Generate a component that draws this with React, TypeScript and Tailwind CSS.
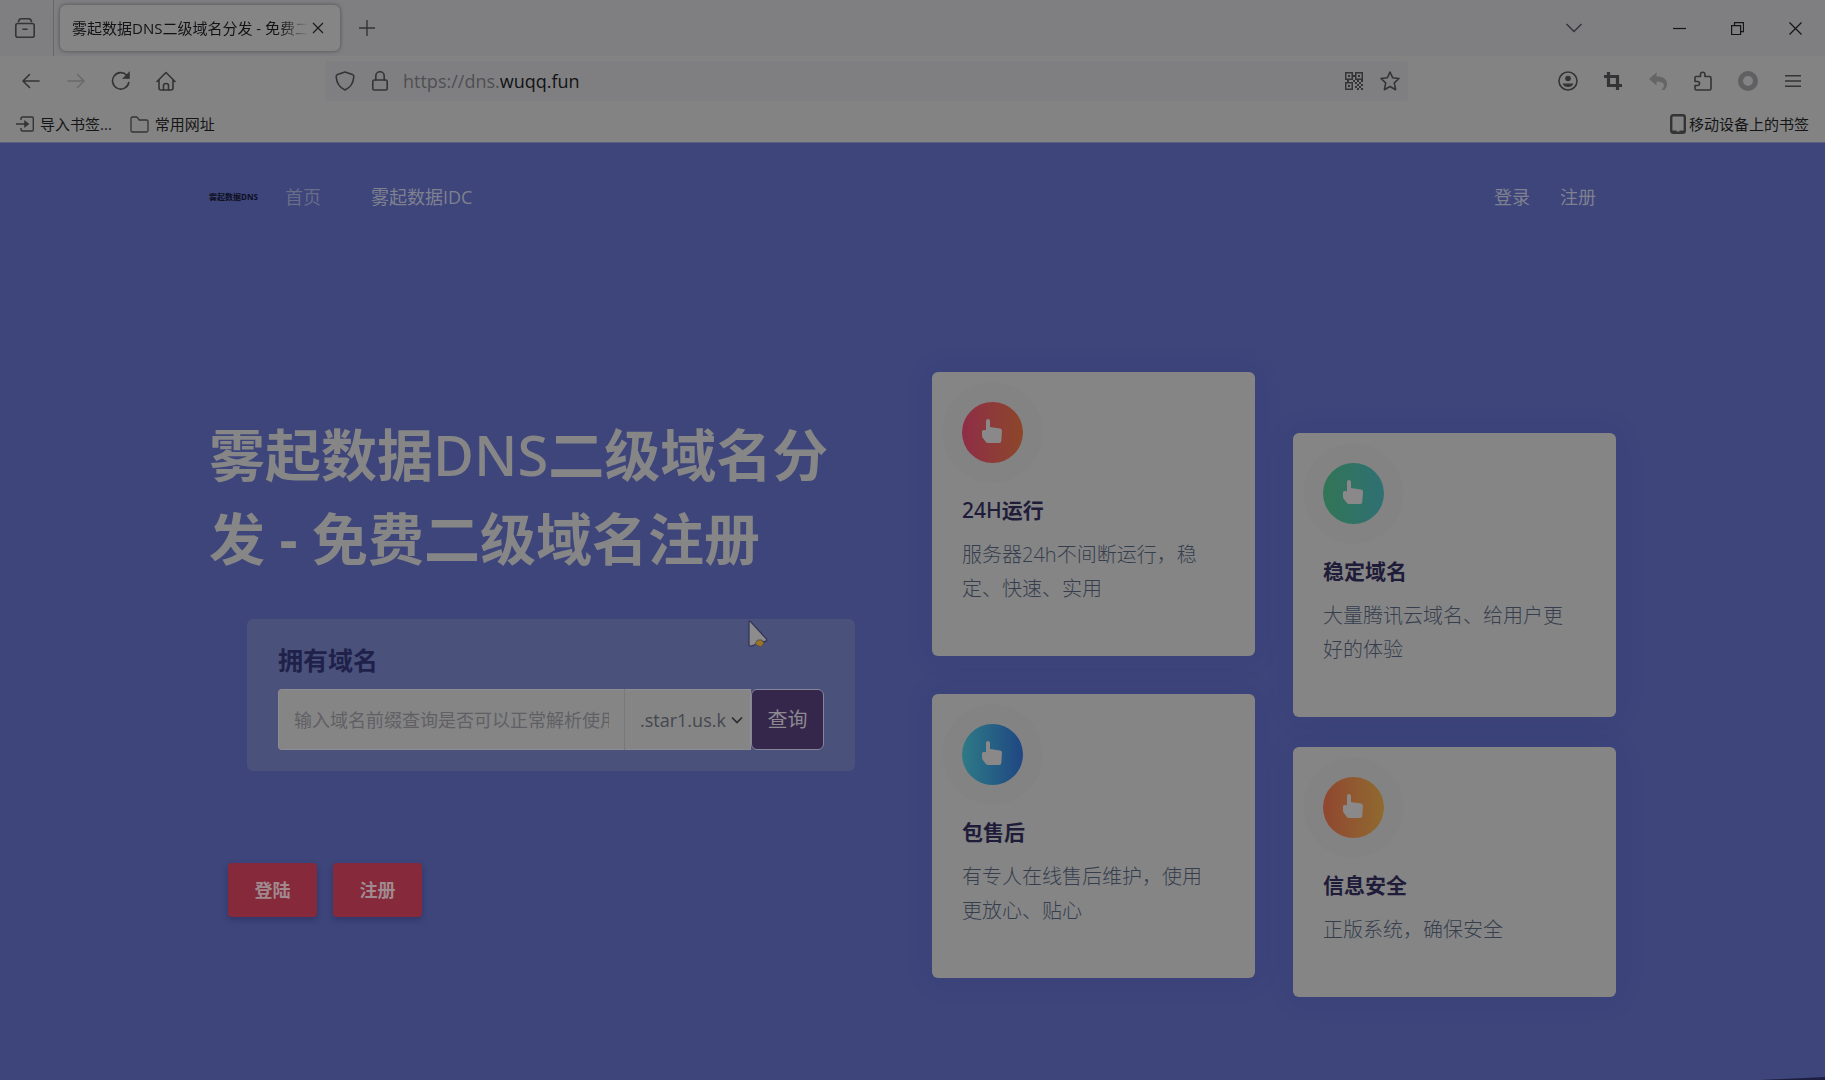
import React from "react";

type IconProps = { children: React.ReactNode; size?: string };

function ToolButton({ label, children, tone = "text-[#343437]" }: { label: string; children: React.ReactNode; tone?: string }) {
  return (
    <button aria-label={label} className={`flex h-10 w-[45px] shrink-0 items-center justify-center ${tone}`}>
      {children}
    </button>
  );
}

function Stroke({ children, size = "size-5" }: IconProps) {
  return (
    <svg viewBox="0 0 20 20" className={size} fill="none" stroke="currentColor" strokeWidth="1.600" strokeLinecap="round" strokeLinejoin="round" aria-hidden="true">
      {children}
    </svg>
  );
}

function TabStrip() {
  return (
    <div className="flex h-14 items-center bg-[#7f7f82]">
      <div className="flex h-full w-[54px] shrink-0 items-center justify-center border-r border-[#67676a] pr-1">
        <button aria-label="最近浏览" className="text-[#343437]">
          <Stroke>
            <path d="M3.500 3.500Q4 .8 6.500 .8h7Q16 .8 16.500 3.500" />
            <rect x=".8" y="5.500" width="18.400" height="13.700" rx="2" />
            <path d="M8 11.300h4" />
          </Stroke>
        </button>
      </div>
      <div className="ml-1.5 flex h-[46px] w-[280px] items-center rounded-md bg-[#858585] pr-4 pl-3 shadow-[0_0_4px_rgba(0,0,0,0.4)]">
        <span className="flex-1 overflow-hidden text-[15px] whitespace-nowrap text-[#131316] [mask-image:linear-gradient(to_right,black_88%,transparent)]">
          雾起数据DNS二级域名分发 - 免费二级域名注册
        </span>
        <button aria-label="关闭标签页" className="ml-1 text-[#1d1d20]">
          <svg viewBox="0 0 12 12" className="size-3" stroke="currentColor" strokeWidth="1.300" aria-hidden="true">
            <path d="M1 1l10 10M11 1L1 11" />
          </svg>
        </button>
      </div>
      <button aria-label="新建标签页" className="ml-[19px] text-[#343437]">
        <svg viewBox="0 0 16 16" className="size-4" stroke="currentColor" strokeWidth="1.400" aria-hidden="true">
          <path d="M8 0v16M0 8h16" />
        </svg>
      </button>
      <div className="flex-1" />
      <button aria-label="列出所有标签页" className="mr-12 flex w-[58px] justify-center text-[#343437]">
        <svg viewBox="0 0 16 10" className="h-[10px] w-4" fill="none" stroke="currentColor" strokeWidth="1.400" aria-hidden="true">
          <path d="M.5 1L8 8.500 15.500 1" />
        </svg>
      </button>
      {[
        ["最小化", "M0 6.500h13"],
        ["还原", "M.6 3.600h9v9h-9zM3.500 3.500V.6h9v9H9.600"],
        ["关闭", "M.5 .5l12 12M12.500 .5l-12 12"],
      ].map(([label, d]) => (
        <button key={label} aria-label={label} className="flex h-full w-[58px] items-center justify-center pr-0.5 text-[#151517]">
          <svg viewBox="0 0 13 13" className="size-[13px]" fill="none" stroke="currentColor" strokeWidth="1.200" aria-hidden="true">
            <path d={d} />
          </svg>
        </button>
      ))}
    </div>
  );
}

function AddressBar() {
  return (
    <div className="flex h-[50px] items-center bg-[#838383] pr-2.5 pl-2">
      <ToolButton label="后退">
        <Stroke><path d="M18 10H2M8.500 3.500L2 10l6.500 6.500" /></Stroke>
      </ToolButton>
      <ToolButton label="前进" tone="text-[#6a6a6b]">
        <Stroke><path d="M2 10h16M11.500 3.500L18 10l-6.500 6.500" /></Stroke>
      </ToolButton>
      <ToolButton label="刷新">
        <Stroke>
          <path d="M17.800 11.500A8.200 8.200 0 1 1 15.800 4.300" />
          <path d="M18.500 1v6.500H12z" fill="currentColor" strokeWidth=".6" />
        </Stroke>
      </ToolButton>
      <ToolButton label="主页">
        <Stroke>
          <path d="M1 10.500L10 1.500l9 9M3 8.800V17q0 2 2 2h10q2 0 2-2V8.800" />
          <path d="M7.500 19v-4.500q0-2 2.500-2t2.500 2V19" />
        </Stroke>
      </ToolButton>
      <div className="ml-[137px] flex h-10 flex-1 items-center rounded bg-[#7f7f82] text-[#343437]">
        <button aria-label="跟踪保护" className="flex w-9 justify-center pl-1">
          <Stroke><path d="M10 1L17.500 3.500Q19 4 18.800 6C18.300 12 15.500 16.500 10 19 4.500 16.500 1.700 12 1.200 6Q1 4 2.500 3.500z" /></Stroke>
        </button>
        <button aria-label="网站信息" className="flex w-9 justify-center pl-0.5">
          <Stroke>
            <rect x="2.800" y="9" width="14.400" height="10" rx="1.500" />
            <path d="M5.800 9V5a4.200 4.200 0 0 1 8.400 0v4" />
          </Stroke>
        </button>
        <label htmlFor="address" className="pl-1.5 text-lg text-[#4f4f51]">https://dns.</label>
        <input id="address" defaultValue="wuqq.fun" className="min-w-0 flex-1 bg-transparent text-lg text-[#121214] outline-none" />
        <button aria-label="二维码" className="flex w-9 justify-center">
          <svg viewBox="0 0 18 18" className="size-[18px]" fill="currentColor" aria-hidden="true">
            <path fillRule="evenodd" d="M0 0h8v8H0zM1.500 1.500v5h5v-5zM10 0h8v8h-8zM11.500 1.500v5h5v-5zM0 10h8v8H0zM1.500 11.500v5h5v-5z" />
            <path d="M3 3h2v2H3zM13 3h2v2h-2zM3 13h2v2H3zM8 3h2v2H8zM2 8h2v2H2zM8 8h2v2H8zM10 10h2v2h-2zM14 10h2v2h-2zM12 12h2v2h-2zM16 12h2v2h-2zM10 14h2v2h-2zM14 14h2v2h-2zM12 16h2v2h-2zM16 16h2v2h-2zM12 8h2v2h-2zM16 8h2v2h-2z" />
          </svg>
        </button>
        <button aria-label="添加书签" className="flex w-9 justify-center">
          <Stroke><path d="M10 1l2.600 5.700 6.400.8-4.700 4.300 1.300 6.900L10 15.500l-5.600 3.200 1.300-6.900L1 7.500l6.400-.8z" /></Stroke>
        </button>
      </div>
      <div className="w-[137px]" />
      <ToolButton label="账户">
        <Stroke>
          <circle cx="10" cy="10" r="9" />
          <circle cx="10" cy="7.500" r="2.800" fill="currentColor" stroke="none" />
          <path d="M4.500 12.500h11q-1.500 3.500-5.500 3.500t-5.500-3.500z" fill="currentColor" stroke="none" />
        </Stroke>
      </ToolButton>
      <ToolButton label="截图">
        <svg viewBox="0 0 18 18" className="size-[18px]" fill="none" stroke="currentColor" strokeWidth="3.200" aria-hidden="true">
          <path d="M4.500 0v13.500H18M0 4.500h13.500V18" />
        </svg>
      </ToolButton>
      <ToolButton label="撤销" tone="text-[#656567]">
        <svg viewBox="0 0 18 18" className="size-[18px]" fill="currentColor" aria-hidden="true">
          <path d="M0 7L7.500 .5v4C14 4.500 18 7 18 12q0 3.500-2.500 6h-3q2.500-2 2.500-4.500 0-4-7.500-4v4z" />
        </svg>
      </ToolButton>
      <ToolButton label="扩展">
        <Stroke><path d="M2 8V6.500Q2 5.500 3 5.500h4.500V3.500a2.200 2.200 0 0 1 4.400 0v2H16.500q1.500 0 1.500 1.500v10.500q0 1.500-1.500 1.500H3.500Q2 19 2 17.500V14.500h2.500a2 2 0 0 0 0-4H2z" /></Stroke>
      </ToolButton>
      <ToolButton label="扩展程序" tone="text-[#606062]">
        <svg viewBox="0 0 20 20" className="size-5" fill="none" stroke="currentColor" strokeWidth="5" aria-hidden="true">
          <circle cx="10" cy="10" r="7.500" />
        </svg>
      </ToolButton>
      <ToolButton label="菜单">
        <svg viewBox="0 0 16 12" className="h-3 w-4" stroke="currentColor" strokeWidth="1.400" aria-hidden="true">
          <path d="M0 .8h16M0 6h16M0 11.200h16" />
        </svg>
      </ToolButton>
    </div>
  );
}

function Bookmarks() {
  return (
    <div className="flex h-[37px] items-center border-b border-[#5c6080] bg-[#838383] px-4 text-[15px] text-[#151517]">
      <button className="flex items-center gap-1.5">
        <svg viewBox="0 0 18 16" className="h-4 w-[18px] text-[#343437]" fill="none" stroke="currentColor" strokeWidth="1.400" aria-hidden="true">
          <path d="M5 4V2.500Q5 1 6.500 1H16q1.300 0 1.300 1.300v11.400Q17.300 15 16 15H6.500Q5 15 5 13.500V12M0 8h9" />
          <path d="M8.500 4.500L13 8l-4.500 3.500z" fill="currentColor" strokeWidth=".5" />
        </svg>
        导入书签...
      </button>
      <button className="ml-[18px] flex items-center gap-1.5">
        <svg viewBox="0 0 19 17" className="h-[17px] w-[19px] text-[#343437]" fill="none" stroke="currentColor" strokeWidth="1.300" aria-hidden="true">
          <path d="M1 14V2.500Q1 1 2.500 1h3.700q.8 0 1.300.6L9.200 4H16.500Q18 4 18 5.500V14.500Q18 16 16.500 16h-14Q1 16 1 14z" />
        </svg>
        常用网址
      </button>
      <div className="flex-1" />
      <button className="flex items-center gap-[3px]">
        <svg viewBox="0 0 16 20" className="h-5 w-4 text-[#343437]" fill="none" stroke="currentColor" strokeWidth="2.400" aria-hidden="true">
          <rect x="1.200" y="1.200" width="13.600" height="17.600" rx="2" />
          <path d="M2 17.800h4.500M9.500 17.800H14" />
        </svg>
        移动设备上的书签
      </button>
    </div>
  );
}

type CardData = { title: React.ReactNode; text: string; gradient: string };

function FeatureCard({ title, text, gradient }: CardData) {
  return (
    <article className="rounded-md bg-[#858585] px-[30px] pt-[30px] pb-[50px] shadow-[0_0_30px_rgba(30,40,110,0.1)]">
      <div className={`flex size-[61px] items-center justify-center rounded-full bg-linear-to-r shadow-[0_0_0_20px_rgba(0,0,0,0.008)] ${gradient}`}>
        <svg viewBox="0 0 20 24" className="mr-0.5 mb-1 h-6 w-5 text-[#8a8888]" fill="currentColor" aria-hidden="true">
          <path d="M4 2C4 .8 5 0 6 0s2 .8 2 2v6l10 1.500c1.200.2 2 1 2 2.400L19.300 22q-.2 2-2 2H6q-1.500 0-2.300-1.200L.8 19Q0 18 0 16.500v-4C0 11.500 1 11 2.500 11 3.500 11 4 11.200 4 12z" />
        </svg>
      </div>
      <h3 className="mt-8 text-[21px] leading-[30px] font-bold text-[#1f1c3a]">{title}</h3>
      <p className="mt-[13px] pr-[11px] text-xl leading-[34px] font-light text-[#363e4e]">{text}</p>
    </article>
  );
}

function Hero() {
  return (
    <main className="mx-auto flex w-full max-w-[1407px] items-start justify-between gap-[77px] pt-[121px]">
      <section className="min-w-0 flex-1 pt-10">
        <h1 className="text-[56px] leading-[84px] font-bold text-[#868686]">
          雾起数据<span className="font-['Noto_Sans',sans-serif] font-medium">DNS</span>二级域名分发 - 免费二级域名注册
        </h1>
        <form className="relative mt-[39px] ml-[38px] rounded-md bg-[#4a517b] px-[31px] pt-[23px] pb-[21px]" onSubmit={(e) => e.preventDefault()}>
          <label htmlFor="prefix" className="block text-[25px] leading-9 font-bold text-[#20214a]">拥有域名</label>
          <div className="mt-[11px] flex h-[61px]">
            <input
              id="prefix"
              placeholder="输入域名前缀查询是否可以正常解析使用"
              className="min-w-0 flex-1 rounded-l border border-[#8c8c92] border-r-[#77777c] bg-[#858585] px-[15px] text-lg text-[#444] outline-none placeholder:text-[#606064]"
            />
            <div className="relative w-[126px]">
              <select aria-label="域名后缀" className="h-full w-full appearance-none border-y border-r border-[#8c8c92] bg-[#858585] pr-6 pl-[15px] text-lg text-[#44474f] outline-none">
                <option>.star1.us.kg</option>
              </select>
              <svg viewBox="0 0 12 8" className="pointer-events-none absolute top-[27px] right-2 h-2 w-3" fill="none" stroke="#2c2c2f" strokeWidth="1.700" aria-hidden="true">
                <path d="M1 1.500l5 5 5-5" />
              </svg>
            </div>
            <button className="w-[73px] rounded-md border border-[#86869a] bg-[#35264b] text-xl text-[#8c8a90]">查询</button>
          </div>
          <svg viewBox="0 0 20 28" className="absolute top-px right-[87px] h-7 w-5" aria-hidden="true">
            <path d="M1 2Q1 .5 2.500 1.500L18.500 19q1 2-1.500 2.500L11 23l-7.500 3Q1 26.500 1 24z" fill="#8d8b8c" stroke="#33365a" strokeWidth="1.300" />
            <path d="M7 24l2.500-4h4.500l2 3.500-3.500 3.500z" fill="#9b7424" stroke="#4a4550" strokeWidth=".8" />
          </svg>
        </form>
        <div className="mt-[92px] ml-[19px] flex gap-4">
          {["登陆", "注册"].map((t) => (
            <button key={t} className="h-[54px] w-[89px] rounded-sm bg-[#86293b] text-lg font-bold text-[#a08a8f] shadow-[0_3px_6px_rgba(20,20,60,0.3)]">{t}</button>
          ))}
        </div>
      </section>
      <section className="grid w-[684px] shrink-0 grid-cols-2 items-start gap-[38px]">
        <div className="flex flex-col gap-[38px]">
          <FeatureCard title={<><span className="font-['Noto_Sans',sans-serif] font-medium">24H</span>运行</>} text="服务器24h不间断运行，稳定、快速、实用" gradient="from-[#8f2c46] to-[#8c4628]" />
          <FeatureCard title="包售后" text="有专人在线售后维护，使用更放心、贴心" gradient="from-[#2f7a86] to-[#204682]" />
        </div>
        <div className="flex flex-col gap-[30px] pt-[61px]">
          <FeatureCard title="稳定域名" text="大量腾讯云域名、给用户更好的体验" gradient="from-[#327556] to-[#2f7073]" />
          <FeatureCard title="信息安全" text="正版系统，确保安全" gradient="from-[#904630] to-[#8f6a2f]" />
        </div>
      </section>
    </main>
  );
}

export default function App() {
  return (
    <div className="relative flex min-h-screen flex-col overflow-hidden bg-[#3d457b] font-['Open_Sans','Noto_Sans_CJK_SC',sans-serif]">
      <header>
        <TabStrip />
        <AddressBar />
        <Bookmarks />
      </header>
      <nav className="mx-auto flex h-[108px] w-full max-w-[1407px] items-center text-lg text-[#7f818f]">
        <a href="#" className="w-11 text-[8px] font-bold whitespace-nowrap text-[#0d0f22]">雾起数据DNS</a>
        <a href="#" className="ml-8 text-[#686d8a]">首页</a>
        <a href="#" className="ml-[50px]">雾起数据IDC</a>
        <div className="flex-1" />
        <a href="#">登录</a>
        <a href="#" className="mr-5 ml-[30px]">注册</a>
      </nav>
      <Hero />
      <svg viewBox="0 0 64 4" className="absolute right-0 bottom-0 h-1 w-16" aria-hidden="true">
        <path d="M0 4L64 1v3z" fill="#1c1f40" />
      </svg>
    </div>
  );
}
